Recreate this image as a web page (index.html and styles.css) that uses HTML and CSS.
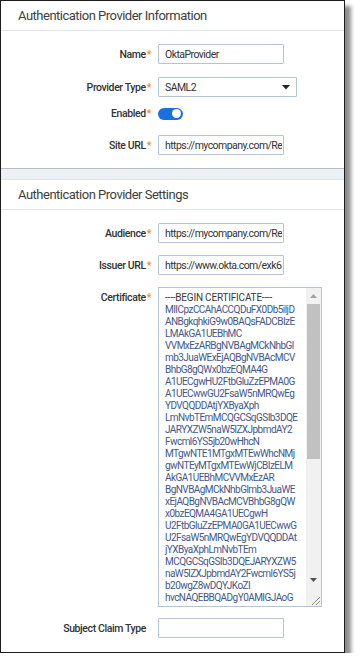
FILE: index.html
```html
<!DOCTYPE html>
<html lang="en">
<head>
    <meta charset="UTF-8">
    <meta name="viewport" content="width=device-width, initial-scale=1.0">
    <title>Authentication Provider</title>
    <link rel="stylesheet" href="styles.css">
</head>
<body>
    <div class="frame">
        <section class="panel panel-info">
            <div class="panel-head">Authentication Provider Information</div>
            <div class="panel-body">
                <div class="row row-name">
                    <label class="field-label" for="name">Name<span class="req">*</span></label>
                    <input class="text-input" type="text" id="name" value="OktaProvider">
                </div>
                <div class="row row-type">
                    <label class="field-label">Provider Type<span class="req">*</span></label>
                    <div class="select">
                        <span>SAML2</span>
                        <svg width="8" height="5" viewBox="0 0 8 5"><path d="M0 0h8L4 4.5z" fill="#222"/></svg>
                    </div>
                </div>
                <div class="row row-enabled">
                    <label class="field-label">Enabled<span class="req">*</span></label>
                    <label class="switch">
                        <input type="checkbox" checked>
                        <span class="slider"></span>
                    </label>
                </div>
                <div class="row">
                    <label class="field-label" for="site">Site URL<span class="req">*</span></label>
                    <input class="text-input" type="text" id="site" value="https://mycompany.com/Relativity">
                </div>
            </div>
        </section>

        <section class="panel panel-settings">
            <div class="panel-head">Authentication Provider Settings</div>
            <div class="panel-body">
                <div class="row">
                    <label class="field-label" for="audience">Audience<span class="req">*</span></label>
                    <input class="text-input" type="text" id="audience" value="https://mycompany.com/Relativity">
                </div>
                <div class="row">
                    <label class="field-label" for="issuer">Issuer URL<span class="req">*</span></label>
                    <input class="text-input" type="text" id="issuer" value="https://www.okta.com/exk6abc">
                </div>
                <div class="row row-cert">
                    <label class="field-label">Certificate<span class="req">*</span></label>
                    <div class="cert">
                        <div class="cert-text">
                            <div class="cert-first">----BEGIN CERTIFICATE----</div>
                            <div>MIICpzCCAhACCQDuFX0Db5iljD</div>
                            <div>ANBgkqhkiG9w0BAQsFADCBIzE</div>
                            <div>LMAkGA1UEBhMC</div>
                            <div>VVMxEzARBgNVBAgMCkNhbGl</div>
                            <div>mb3JuaWExEjAQBgNVBAcMCV</div>
                            <div>BhbG8gQWx0bzEQMA4G</div>
                            <div>A1UECgwHU2FtbGluZzEPMA0G</div>
                            <div>A1UECwwGU2FsaW5nMRQwEg</div>
                            <div>YDVQQDDAtjYXByaXph</div>
                            <div>LmNvbTEmMCQGCSqGSIb3DQE</div>
                            <div>JARYXZW5naW5lZXJpbmdAY2</div>
                            <div>Fwcml6YS5jb20wHhcN</div>
                            <div>MTgwNTE1MTgxMTEwWhcNMj</div>
                            <div>gwNTEyMTgxMTEwWjCBIzELM</div>
                            <div>AkGA1UEBhMCVVMxEzAR</div>
                            <div>BgNVBAgMCkNhbGlmb3JuaWE</div>
                            <div>xEjAQBgNVBAcMCVBhbG8gQW</div>
                            <div>x0bzEQMA4GA1UECgwH</div>
                            <div>U2FtbGluZzEPMA0GA1UECwwG</div>
                            <div>U2FsaW5nMRQwEgYDVQQDDAt</div>
                            <div>jYXByaXphLmNvbTEm</div>
                            <div>MCQGCSqGSIb3DQEJARYXZW5</div>
                            <div>naW5lZXJpbmdAY2Fwcml6YS5j</div>
                            <div>b20wgZ8wDQYJKoZI</div>
                            <div>hvcNAQEBBQADgY0AMIGJAoG</div>
                        </div>
                        <div class="scrollbar">
                            <div class="sb-btn">
                                <svg width="7" height="4" viewBox="0 0 7 4"><path d="M0 4L3.5 0L7 4z" fill="#a3a3a3"/></svg>
                            </div>
                            <div class="sb-track">
                                <div class="sb-thumb"></div>
                            </div>
                            <div class="sb-btn">
                                <svg width="7" height="4" viewBox="0 0 7 4"><path d="M0 0h7L3.5 4z" fill="#505050"/></svg>
                            </div>
                            <div class="sb-corner">
                                <svg width="9" height="9" viewBox="0 0 9 9"><path d="M1 9L9 1M5 9L9 5" stroke="#8a8a8a" stroke-width="1"/></svg>
                            </div>
                        </div>
                    </div>
                </div>
                <div class="row">
                    <label class="field-label" for="subject">Subject Claim Type</label>
                    <input class="text-input" type="text" id="subject" value="">
                </div>
            </div>
        </section>
    </div>
</body>
</html>
```

FILE: styles.css
```css
body {
    margin: 0;
    font-family: Roboto, "Liberation Sans", sans-serif;
    background-color: #fff;
}
.frame {
    width: 345px;
    height: 653px;
    box-sizing: border-box;
    border: 1px solid #1c1c1c;
    background-color: #edf1f5;
    box-shadow: 6px 6px 4px rgba(0,0,0,0.45);
    display: flex;
    flex-direction: column;
}
.panel {
    background-color: white;
}
.panel-info {
    border-bottom: 1px solid #b4bcc5;
}
.panel-settings {
    margin-top: 10px;
    border-top: 1px solid #dde4eb;
    flex: 1;
}
.panel-head {
    height: 29px;
    line-height: 29px;
    padding-left: 17px;
    font-size: 13px;
    letter-spacing: -0.5px;
    color: #3e3e3e;
    border-bottom: 1px solid #dfe6ed;
}
.panel-body {
    padding: 13px 0 13px;
}
.row {
    display: flex;
    align-items: center;
    gap: 12px;
    margin-bottom: 12px;
}
.row:last-child {
    margin-bottom: 0;
}
.row-name {
    margin-bottom: 13px;
}
.row-type {
    margin-bottom: 10px;
}
.row-enabled {
    margin-bottom: 15px;
}
.row-cert {
    align-items: flex-start;
    margin-bottom: 11px;
}
.field-label {
    flex: 0 0 145px;
    text-align: right;
    font-size: 10.5px;
    font-weight: 500;
    letter-spacing: -0.4px;
    color: #333;
}
.row-cert .field-label {
    line-height: 12px;
    padding-top: 5px;
}
.req {
    color: #f0892a;
    margin-left: 1px;
    margin-right: -5px;
}
.text-input, .select {
    width: 126px;
    height: 20px;
    box-sizing: border-box;
    border: 1px solid #b3c4d6;
    border-radius: 1px;
    padding: 0 1px 0 6px;
    font-family: Roboto, "Liberation Sans", sans-serif;
    font-size: 10.5px;
    letter-spacing: -0.55px;
    color: #333;
    background: white;
    outline: none;
}
.select {
    width: 139px;
    display: flex;
    align-items: center;
    justify-content: space-between;
    padding-right: 6px;
}
.switch {
    position: relative;
    display: inline-block;
    width: 25px;
    height: 12px;
}
.switch input {
    opacity: 0;
    width: 0;
    height: 0;
    margin: 0;
}
.slider {
    position: absolute;
    top: 0;
    left: 0;
    right: 0;
    bottom: 0;
    background-color: #1b6fe2;
    border-radius: 6px;
}
.slider:before {
    position: absolute;
    content: "";
    height: 9px;
    width: 9px;
    right: 2px;
    top: 1.5px;
    background-color: white;
    border-radius: 50%;
}
.cert {
    width: 164px;
    height: 320px;
    box-sizing: border-box;
    border: 1px solid #b3c4d6;
    display: flex;
    overflow: hidden;
}
.cert-text {
    flex: 1;
    padding: 4px 0 0 6px;
    font-size: 10px;
    line-height: 12px;
    letter-spacing: -0.55px;
    color: #44578a;
    white-space: nowrap;
    overflow: hidden;
}
.cert-first {
    color: #3a3a3a;
    letter-spacing: -0.2px;
}
.scrollbar {
    width: 15px;
    background-color: #f1f1f1;
    display: flex;
    flex-direction: column;
}
.sb-btn {
    height: 16px;
    display: flex;
    align-items: center;
    justify-content: center;
}
.sb-track {
    flex: 1;
}
.sb-thumb {
    height: 155px;
    margin: 0 1px;
    background-color: #c1c1c1;
}
.sb-corner {
    height: 17px;
    display: flex;
    align-items: flex-end;
    justify-content: flex-end;
    padding: 0 1px 1px 0;
}
```
